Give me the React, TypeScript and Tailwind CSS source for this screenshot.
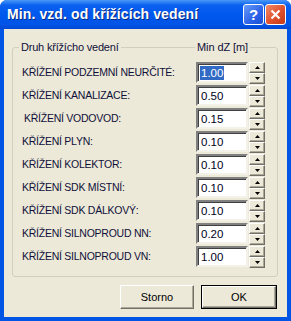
import React from "react";

const rows: { label: string; value: string; selected?: boolean; indent?: boolean }[] = [
  { label: "KŘÍŽENÍ PODZEMNÍ NEURČITÉ:", value: "1.00", selected: true },
  { label: "KŘÍŽENÍ KANALIZACE:", value: "0.50" },
  { label: "KŘÍŽENÍ VODOVOD:", value: "0.15", indent: true },
  { label: "KŘÍŽENÍ PLYN:", value: "0.10" },
  { label: "KŘÍŽENÍ KOLEKTOR:", value: "0.10" },
  { label: "KŘÍŽENÍ SDK MÍSTNÍ:", value: "0.10" },
  { label: "KŘÍŽENÍ SDK DÁLKOVÝ:", value: "0.10" },
  { label: "KŘÍŽENÍ SILNOPROUD NN:", value: "0.20" },
  { label: "KŘÍŽENÍ SILNOPROUD VN:", value: "1.00" },
];

function SpinBtn({ up }: { up?: boolean }) {
  return (
    <div className="h-[11px] w-[16px] bg-[#ECE9D8] border border-t-white border-l-white border-r-[#716F64] border-b-[#716F64] shadow-[inset_-1px_-1px_0_#ACA899] flex items-center justify-center">
      <svg width="5" height="3" viewBox="0 0 5 3">
        {up ? (
          <polygon points="2.5,0 5,3 0,3" fill="#000" />
        ) : (
          <polygon points="0,0 5,0 2.5,3" fill="#000" />
        )}
      </svg>
    </div>
  );
}

function Row({ label, value, selected, indent }: { label: string; value: string; selected?: boolean; indent?: boolean }) {
  return (
    <div className="flex h-[23px] items-start">
      <div className={`w-[174px] h-[21px] flex items-center whitespace-nowrap text-[10.5px] tracking-[-0.25px] text-[#10103A] ${indent ? "pl-[2px]" : ""}`}>{label}</div>
      <div className="w-[52px] h-[21px] bg-white border-2 border-t-[#808080] border-l-[#808080] border-r-[#F4F2E8] border-b-[#F4F2E8] shadow-[inset_1px_1px_0_#404040] flex items-center pl-[2px] text-[11.5px] text-[#000020]">
        <span className={selected ? "bg-[#316AC5] text-white px-[1px] leading-[14px]" : "px-[1px] leading-[14px]"}>{value}</span>
      </div>
      <div className="ml-[1px] flex flex-col">
        <SpinBtn up />
        <SpinBtn />
      </div>
    </div>
  );
}

function Btn({ children, def }: { children: React.ReactNode; def?: boolean }) {
  return (
    <div className={`h-[24px] ${def ? "w-[76px] border border-black" : "w-[74px]"}`}>
      <div className="h-full w-full bg-[#ECE9D8] border border-t-white border-l-white border-r-[#716F64] border-b-[#716F64] shadow-[inset_-1px_-1px_0_#ACA899] flex items-center justify-center text-[11px]">
        {children}
      </div>
    </div>
  );
}

export default function App() {
  return (
    <div className="w-[291px] h-[321px] flex flex-col rounded-t-[7px] overflow-hidden bg-[#0055E5] font-['Liberation_Sans',sans-serif] text-[11px] text-black">
      <div className="h-[29px] shrink-0 flex items-center pl-[7px] pr-[5px] bg-[linear-gradient(to_bottom,#4A98F8_0%,#0A60EE_18%,#0058EE_50%,#0054E6_85%,#0046D2_100%)]">
        <div className="flex-1 text-white font-bold text-[14px] tracking-[0.1px] [text-shadow:1px_1px_0_#0A2A80]">
          Min. vzd. od křížících vedení
        </div>
        <div className="flex gap-[1px]">
          <div className="w-[21px] h-[21px] rounded-[3px] border border-white bg-[linear-gradient(135deg,#6A9CF7,#2B62E8_60%,#1D4FD4)] flex items-center justify-center text-white font-bold text-[15px] leading-none">
            ?
          </div>
          <div className="w-[21px] h-[21px] rounded-[3px] border border-white bg-[linear-gradient(135deg,#F08A6A,#E0502C_55%,#C43A18)] flex items-center justify-center">
            <svg width="11" height="11" viewBox="0 0 11 11">
              <path d="M1.5 1.5 L9.5 9.5 M9.5 1.5 L1.5 9.5" stroke="#fff" strokeWidth="2.2" />
            </svg>
          </div>
        </div>
      </div>
      <div className="flex-1 mx-[4px] mb-[4px] bg-[#ECE9D8] flex flex-col">
        <div className="relative mt-[18px] ml-[8px] w-[266px] h-[230px] border border-[#D0D0BF] rounded-[3px] pt-[14px] pl-[9px]">
          <div className="absolute -top-[8px] left-[6px] bg-[#ECE9D8] px-[2px] leading-[14px] text-[11px] tracking-[-0.2px] text-[#10103A]">Druh křížícho vedení</div>
          <div className="absolute -top-[8px] left-[182px] bg-[#ECE9D8] px-[2px] leading-[14px] text-[11px] tracking-[-0.1px] text-[#10103A]">Min dZ [m]</div>
          {rows.map((r, i) => (
            <Row key={i} {...r} />
          ))}
        </div>
        <div className="flex justify-end gap-[7px] mt-[8px] pr-[10px]">
          <Btn>Storno</Btn>
          <Btn def>OK</Btn>
        </div>
      </div>
    </div>
  );
}
